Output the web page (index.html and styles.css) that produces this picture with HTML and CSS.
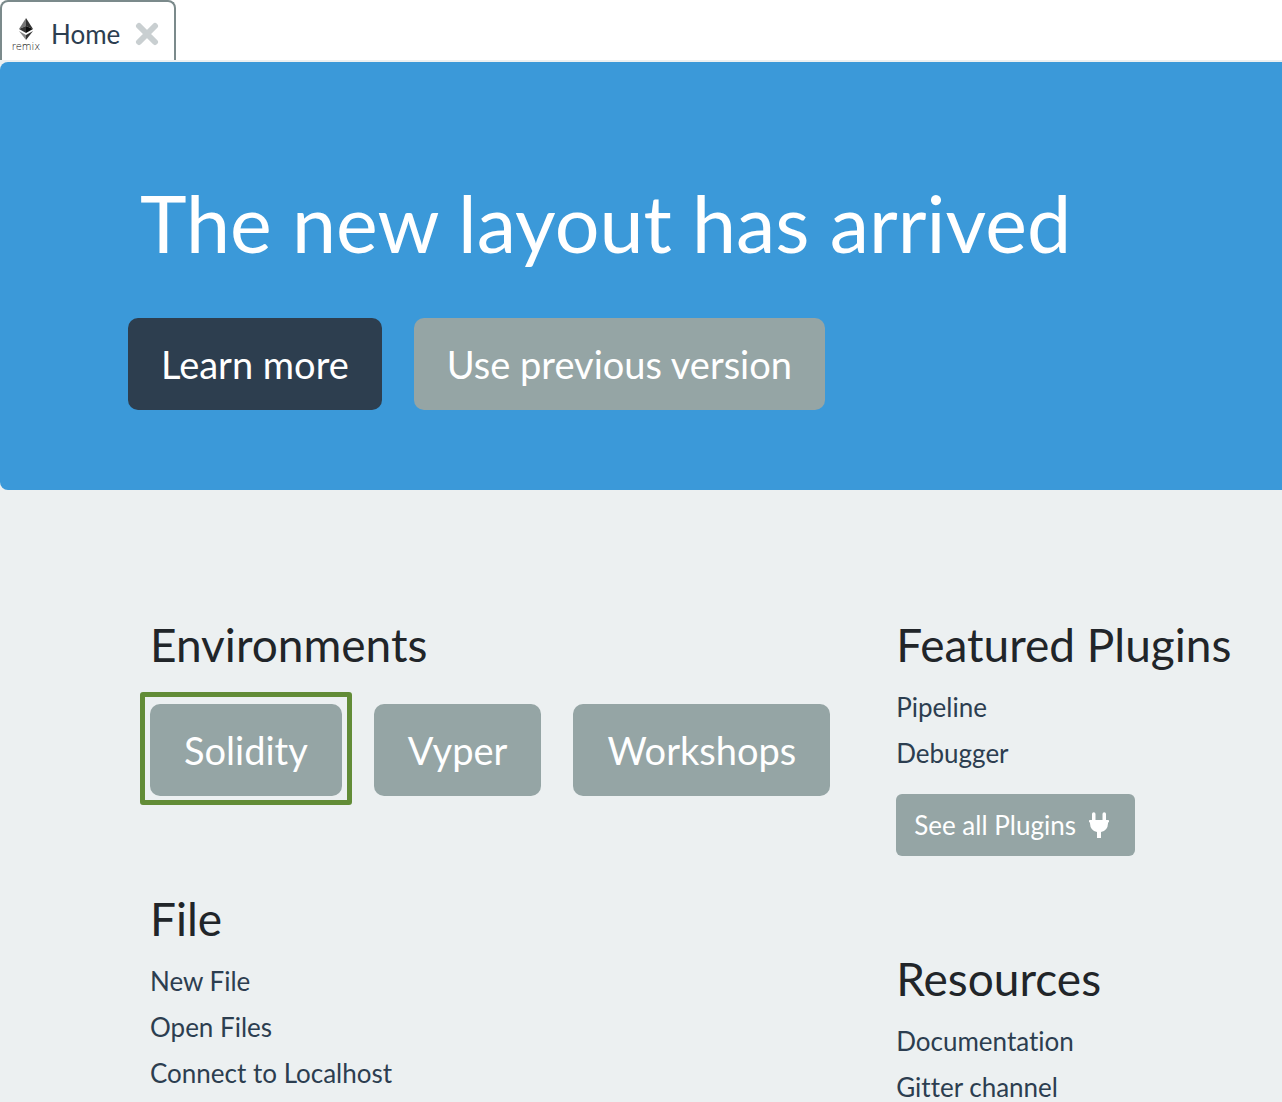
FILE: index.html
```html
<!DOCTYPE html>
<html lang="en">
<head>
<meta charset="utf-8">
<meta name="viewport" content="width=device-width, initial-scale=1">
<title>Remix</title>
<link rel="stylesheet" href="styles.css">
</head>
<body>
<nav class="tabs">
  <div class="tab">
    <span class="logo">
      <svg class="logo-mark" viewBox="0 0 14 22" aria-hidden="true">
        <path fill="#777" d="M7 0 0 11 7 8z"/>
        <path fill="#333" d="M7 0l7 11-7-3z"/>
        <path fill="#333" d="M0 11l7-3v7z"/>
        <path fill="#0c0c0c" d="M14 11 7 8v7z"/>
        <path fill="#888" d="M0 13l7 4v5z"/>
        <path fill="#333" d="M14 13l-7 4v5z"/>
      </svg>
      <span class="logo-name">remix</span>
    </span>
    <a class="tab-title" href="#home">Home</a>
    <button class="tab-close" type="button" aria-label="Close tab">
      <svg viewBox="0 0 24 24" aria-hidden="true"><path d="M4 4l16 16M20 4 4 20" fill="none" stroke="#c9cfd1" stroke-width="6" stroke-linecap="round"/></svg>
    </button>
  </div>
</nav>
<main class="home" id="home">
  <section class="banner">
    <h1 class="banner-title">The new layout has arrived</h1>
    <div class="button-row">
      <button class="btn btn-primary" type="button">Learn more</button>
      <button class="btn" type="button">Use previous version</button>
    </div>
  </section>
  <div class="columns">
    <div class="column">
      <section>
        <h2 class="heading">Environments</h2>
        <div class="button-row environments">
          <div class="marked"><button class="btn" type="button">Solidity</button></div>
          <button class="btn" type="button">Vyper</button>
          <button class="btn" type="button">Workshops</button>
        </div>
      </section>
      <section>
        <h2 class="heading">File</h2>
        <div class="links">
          <a href="#new">New File</a>
          <a href="#open">Open Files</a>
          <a href="#connect">Connect to Localhost</a>
        </div>
      </section>
    </div>
    <div class="column">
      <section>
        <h2 class="heading">Featured Plugins</h2>
        <div class="links">
          <a href="#pipeline">Pipeline</a>
          <a href="#debugger">Debugger</a>
        </div>
        <button class="btn btn-small" type="button">See all Plugins
          <svg class="plug" viewBox="0 0 20 26" aria-hidden="true"><path fill="#fff" d="M3 8V2a1.750 1.750 0 0 1 3.500 0v6zM13.500 8V2A1.750 1.750 0 0 1 17 2v6zM.8 8h18.400q.8 0 .8.800v1q0 .8-.8.800H19v1a9 9 0 0 1-7 8.500V26H8v-5.900a9 9 0 0 1-7-8.500v-1H.8Q0 10.600 0 9.800v-1Q0 8 .8 8z"/></svg>
        </button>
      </section>
      <section>
        <h2 class="heading">Resources</h2>
        <div class="links">
          <a href="#docs">Documentation</a>
          <a href="#gitter">Gitter channel</a>
        </div>
      </section>
    </div>
  </div>
</main>
</body>
</html>
```
FILE: styles.css
```css
* {
  box-sizing: border-box;
}

body {
  margin: 0;
  background: #ecf0f1;
  color: #212529;
  font-family: Lato, sans-serif;
  font-size: 26px;
  font-variant-ligatures: none;
  line-height: 30px;
}

a {
  color: #2c3e50;
  text-decoration: none;
}

button {
  border: 0;
  font-family: inherit;
  cursor: pointer;
}

.tabs {
  display: flex;
  height: 60px;
  margin-bottom: 2px;
  background: #fff;
}

.tab {
  display: flex;
  align-items: center;
  padding: 6px 15px 0 10px;
  border: 2px solid #7b8a8b;
  border-bottom: 0;
  border-radius: 8px 8px 0 0;
}

.logo {
  display: flex;
  flex-direction: column;
  align-items: center;
  gap: 1px;
  width: 28px;
  margin-right: 11px;
  padding-top: 3px;
}

.logo-mark {
  width: 14px;
  height: 22px;
}

.logo-name {
  color: #000;
  font: 200 10px/12px "DejaVu Sans", sans-serif;
}

.tab-close {
  display: flex;
  margin-left: 15px;
  padding: 0;
  background: none;
}

.tab-close svg {
  width: 24px;
  height: 24px;
}

.banner {
  padding: 113px 128px 80px;
  border-radius: 8px 0 0 8px;
  background: #3b99d9;
}

.banner-title {
  margin: 0 0 47px 12px;
  color: #fff;
  font-size: 79px;
  font-weight: 400;
  line-height: 96px;
}

.button-row {
  display: flex;
  gap: 32px;
}

.environments {
  padding-top: 12px;
}

.btn {
  padding: 23px 34px;
  border-radius: 10px;
  background: #95a5a5;
  color: #fff;
  font-size: 38px;
  line-height: 46px;
  white-space: nowrap;
}

.banner .btn {
  padding: 23px 33px;
}

.btn-primary {
  background: #2d3e4f;
}

.banner .btn-primary {
  background: #2d3e4f;
}

.btn-small {
  display: flex;
  align-items: center;
  gap: 13px;
  margin-top: 26px;
  padding: 16px 26px 16px 18px;
  border-radius: 6px;
  font-size: 26px;
  line-height: 30px;
}

.plug {
  width: 20px;
  height: 26px;
}

.marked {
  position: relative;
}

.marked::after {
  position: absolute;
  inset: -12px -10px -9px;
  border: 5px solid #628c37;
  border-radius: 3px;
  content: "";
  pointer-events: none;
}

.columns {
  display: grid;
  grid-template-columns: max-content 1fr;
  gap: 66px;
  padding: 128px 0 0 150px;
}

.column {
  display: flex;
  flex-direction: column;
  gap: 96px;
}

.heading {
  margin: 0 0 20px;
  font-size: 46px;
  font-weight: 400;
  line-height: 54px;
}

.links {
  display: flex;
  flex-direction: column;
  align-items: flex-start;
  gap: 16px;
}
```
